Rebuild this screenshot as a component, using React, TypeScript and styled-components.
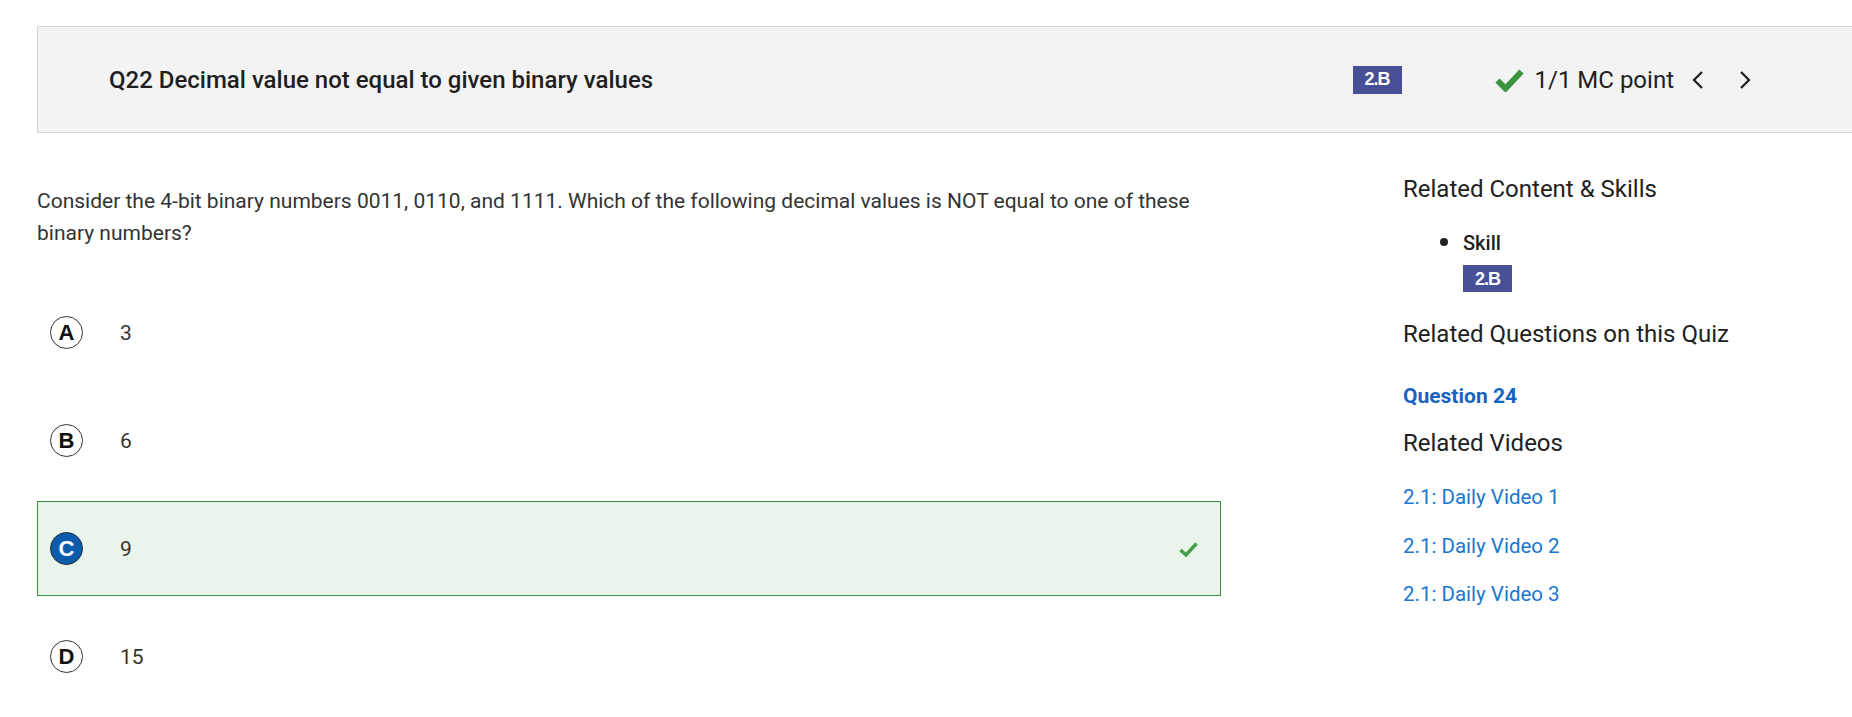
import React from "react";
import styled, { createGlobalStyle } from "styled-components";

const GlobalStyle = createGlobalStyle`
  body {
    margin: 0;
    background: #ffffff;
    font-family: Roboto, "Liberation Sans", sans-serif;
    color: #212121;
  }
`;

const Page = styled.div`
  padding-top: 26px;
`;

const Header = styled.header`
  margin-left: 37px;
  height: 105px;
  display: flex;
  align-items: center;
  background: #f3f3f3;
  border: 1px solid #d6d6d6;
  border-right: none;
  padding-left: 71px;
  padding-right: 90px;
`;

const Title = styled.h1`
  flex: 1;
  margin: 0;
  font-size: 24px;
  font-weight: 500;
  color: #1f1f1f;
`;

const Badge = styled.span<{ $size?: number }>`
  display: inline-flex;
  align-items: center;
  justify-content: center;
  width: 49px;
  height: ${(p) => p.$size ?? 28}px;
  background: #474f96;
  color: #ffffff;
  font-family: "Liberation Sans", Arial, sans-serif;
  font-weight: 700;
  font-size: 18px;
  letter-spacing: -1px;
`;

const Score = styled.div`
  display: flex;
  align-items: center;
  margin-left: 93px;
  font-size: 24px;
  color: #212121;
`;

const ScoreText = styled.span`
  margin-left: 11px;
  margin-right: 7px;
`;

const NavButton = styled.button`
  display: flex;
  align-items: center;
  justify-content: center;
  width: 34px;
  height: 34px;
  padding: 0;
  border: none;
  background: transparent;
  cursor: pointer;
  & + & {
    margin-left: 13px;
  }
`;

const Main = styled.main`
  display: grid;
  grid-template-columns: 1184px 1fr;
  column-gap: 182px;
  margin-left: 37px;
  margin-top: 42px;
`;

const Question = styled.p`
  margin: 10px 0 0;
  font-size: 21px;
  line-height: 32px;
  color: #333333;
`;

const Options = styled.div`
  margin-top: 36px;
  display: flex;
  flex-direction: column;
  gap: 13px;
`;

const Option = styled.div<{ $correct?: boolean }>`
  display: flex;
  align-items: center;
  height: 95px;
  box-sizing: border-box;
  padding: 0 22px 0 12px;
  border: 1px solid ${(p) => (p.$correct ? "#3d8f41" : "transparent")};
  background: ${(p) => (p.$correct ? "#e9f4ea" : "transparent")};
`;

const Letter = styled.span<{ $selected?: boolean }>`
  display: inline-flex;
  align-items: center;
  justify-content: center;
  width: 33px;
  height: 33px;
  box-sizing: border-box;
  border-radius: 50%;
  border: 1px solid ${(p) => (p.$selected ? "#1c2b3a" : "#333333")};
  background: ${(p) => (p.$selected ? "#0b5cad" : "#ffffff")};
  color: ${(p) => (p.$selected ? "#ffffff" : "#111111")};
  font-family: "Liberation Sans", Arial, sans-serif;
  font-weight: 700;
  font-size: 22px;
`;

const Value = styled.span`
  flex: 1;
  margin-left: 37px;
  font-size: 21px;
  color: #333333;
`;

const Side = styled.aside`
  display: flex;
  flex-direction: column;
  align-items: flex-start;
`;

const SideHeading = styled.h2<{ $gap?: number }>`
  margin: ${(p) => p.$gap ?? 0}px 0 0;
  font-size: 24px;
  font-weight: 400;
  line-height: 28px;
  color: #212121;
`;

const SkillList = styled.ul`
  margin: 25px 0 0;
  padding-left: 60px;
  font-size: 20px;
  line-height: 24px;
`;

const SkillItem = styled.li`
  font-weight: 500;
  color: #212121;
  &::marker {
    font-size: 26px;
    line-height: 1;
  }
  & > span {
    display: block;
    height: 24px;
  }
`;

const SkillBadge = styled.div`
  margin-top: 10px;
`;

const QuizLink = styled.a`
  margin-top: 36px;
  font-size: 21px;
  line-height: 24px;
  font-weight: 700;
  color: #1565c0;
  text-decoration: none;
`;

const VideoList = styled.div`
  margin-top: 28px;
  display: flex;
  flex-direction: column;
  gap: 24.5px;
`;

const VideoLink = styled.a`
  font-size: 20.5px;
  line-height: 24px;
  color: #1976d2;
  text-decoration: none;
`;

const BigCheck = () => (
  <svg width="29" height="24" viewBox="0 0 29 24">
    <path d="M2.5 12.5 L10.5 20.5 L26.5 3.5" fill="none" stroke="#3a9440" strokeWidth="6" strokeLinejoin="miter" />
  </svg>
);

const SmallCheck = () => (
  <svg width="19" height="16" viewBox="0 0 19 16">
    <path d="M1.5 9 L7 14 L17.5 2.5" fill="none" stroke="#43a047" strokeWidth="3.4" />
  </svg>
);

const Chevron = ({ dir }: { dir: "left" | "right" }) => (
  <svg width="14" height="20" viewBox="0 0 14 20">
    <path
      d={dir === "left" ? "M11 2 L3 10 L11 18" : "M3 2 L11 10 L3 18"}
      fill="none"
      stroke="#1a1a1a"
      strokeWidth="2.2"
    />
  </svg>
);

const options = [
  { letter: "A", value: "3" },
  { letter: "B", value: "6" },
  { letter: "C", value: "9", correct: true },
  { letter: "D", value: "15" },
];

const videos = ["2.1: Daily Video 1", "2.1: Daily Video 2", "2.1: Daily Video 3"];

export default function App() {
  return (
    <>
      <GlobalStyle />
      <Page>
        <Header>
          <Title>Q22 Decimal value not equal to given binary values</Title>
          <Badge $size={28}>2.B</Badge>
          <Score>
            <BigCheck />
            <ScoreText>1/1 MC point</ScoreText>
            <NavButton aria-label="Previous question">
              <Chevron dir="left" />
            </NavButton>
            <NavButton aria-label="Next question">
              <Chevron dir="right" />
            </NavButton>
          </Score>
        </Header>
        <Main>
          <section>
            <Question>
              Consider the 4-bit binary numbers 0011, 0110, and 1111. Which of the following decimal values is NOT
              equal to one of these binary numbers?
            </Question>
            <Options>
              {options.map((o) => (
                <Option key={o.letter} $correct={o.correct}>
                  <Letter $selected={o.correct}>{o.letter}</Letter>
                  <Value>{o.value}</Value>
                  {o.correct && <SmallCheck />}
                </Option>
              ))}
            </Options>
          </section>
          <Side>
            <SideHeading>Related Content &amp; Skills</SideHeading>
            <SkillList>
              <SkillItem>
                <span>Skill</span>
                <SkillBadge>
                  <Badge $size={27}>2.B</Badge>
                </SkillBadge>
              </SkillItem>
            </SkillList>
            <SideHeading $gap={28}>Related Questions on this Quiz</SideHeading>
            <QuizLink href="#">Question 24</QuizLink>
            <SideHeading $gap={21}>Related Videos</SideHeading>
            <VideoList>
              {videos.map((v) => (
                <VideoLink key={v} href="#">
                  {v}
                </VideoLink>
              ))}
            </VideoList>
          </Side>
        </Main>
      </Page>
    </>
  );
}
